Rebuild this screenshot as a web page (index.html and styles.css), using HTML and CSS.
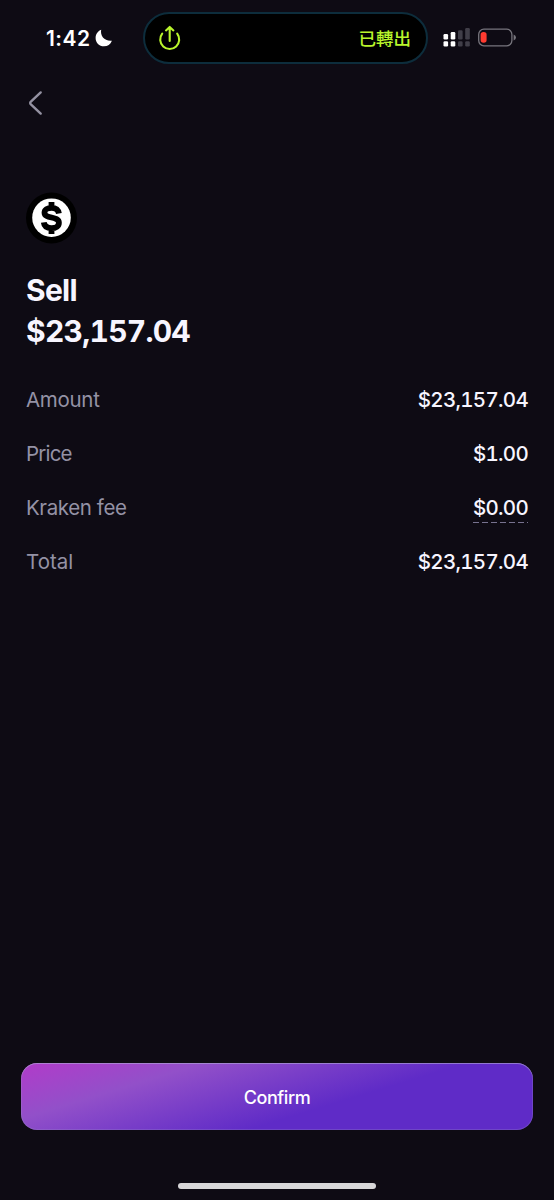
FILE: index.html
```html
<!DOCTYPE html>
<html lang="zh-Hant">
<head>
<meta charset="utf-8">
<title>Sell</title>
<link rel="stylesheet" href="styles.css">
</head>
<body>
<main class="screen">
  <header class="status">
    <div class="clock">
      <span class="time">1:42</span>
      <svg class="moon" width="18" height="18" viewBox="0 0 18 18"><path d="M6.2.8C4.9 6.900 9.600 12.500 16.900 11.700C15.500 15.300 12.600 17.300 9 17.300C4.200 17.300.6 13.700.6 9C.6 5.200 2.800 2.100 6.200.8Z" fill="#fff"/></svg>
    </div>
    <div class="island">
      <svg width="24" height="26" viewBox="0 0 24 26" fill="none" stroke="#b9f52c" stroke-width="2.100" stroke-linecap="round" stroke-linejoin="round"><path d="M4.200 8.600A9.500 9.500 0 1 0 19.200 8.600M11.700 16V2.600M8 5.400L11.700 1.900L15.400 5.400"/></svg>
      <span class="island-label">已轉出</span>
    </div>
    <div class="indicators">
      <svg width="28" height="20" viewBox="0 0 28 20"><g fill="#fff"><rect x=".5" y="13.300" width="4.600" height="5.200" rx="1.200"/><rect x=".5" y="6" width="4.600" height="5.400" rx="1.200"/><rect x="7.700" y="13.300" width="4.600" height="5.200" rx="1.200"/><rect x="7.700" y="4.100" width="4.600" height="7.300" rx="1.200"/></g><g fill="#403e48"><rect x="15" y="13.300" width="4.600" height="5.200" rx="1.200"/><rect x="15" y="2.200" width="4.600" height="9.200" rx="1.200"/><rect x="22.200" y="13.300" width="4.600" height="5.200" rx="1.200"/><rect x="22.200" y="0" width="4.600" height="11.400" rx="1.200"/></g></svg>
      <svg width="39" height="20" viewBox="0 0 39 20"><rect x=".7" y="1.200" width="33.200" height="16.600" rx="5.200" fill="none" stroke="#77757d" stroke-width="1.300"/><rect x="2.600" y="4" width="6" height="10.800" rx="2.800" fill="#ff3b30"/><path d="M35.600 6.600Q38 7.800 38 9.600T35.600 12.500Z" fill="#77757d"/></svg>
    </div>
  </header>

  <button class="back" aria-label="Back">
    <svg width="16" height="26" viewBox="0 0 16 26" fill="none" stroke="#9492a2" stroke-width="2.400" stroke-linecap="round" stroke-linejoin="round"><path d="M12.700 2.400L2.900 11.600Q1.500 13 2.900 14.400L12.700 23.600"/></svg>
  </button>

  <svg class="coin" width="52" height="52" viewBox="0 0 52 52"><circle cx="26.500" cy="26" r="25.500" fill="#000"/><circle cx="26.500" cy="25.700" r="19.300" fill="#fff"/><path d="M33.900 21.600C33.200 17.500 30.300 15.900 26.500 15.900C22.500 15.900 19.500 17.700 19.500 20.700C19.500 27.200 33.900 23.800 33.900 30.700C33.900 34.300 30.700 36.100 26.700 36.100C22.200 36.100 19.200 34.300 18.800 30.400M26.500 10V16M26.500 36V42" fill="none" stroke="#000" stroke-width="5.800"/></svg>

  <h1 class="title"><span class="side">Sell</span><span class="sum">$23,157.04</span></h1>

  <dl class="details">
    <div class="row"><dt class="amount">Amount</dt><dd>$23,157.04</dd></div>
    <div class="row"><dt class="price">Price</dt><dd>$1.00</dd></div>
    <div class="row"><dt class="fee">Kraken fee</dt><dd class="hint">$0.00</dd></div>
    <div class="row"><dt class="total">Total</dt><dd>$23,157.04</dd></div>
  </dl>

  <footer class="footer">
    <button class="confirm">Confirm</button>
    <div class="home"></div>
  </footer>
</main>
</body>
</html>
```
FILE: styles.css
```css
* { box-sizing: border-box; }
body { margin: 0; background: #0e0b14; }
button { border: 0; background: none; padding: 0; font: inherit; color: inherit; }
svg { display: block; flex: none; }
.screen {
  height: 1200px;
  display: flex;
  flex-direction: column;
  color: #f7f5ff;
  font-family: Inter, "Liberation Sans", sans-serif;
}
.status { height: 64px; display: flex; padding: 12px 0 0 46px; flex: none; }
.clock { width: 97px; height: 52px; display: flex; align-items: center; gap: 5px; color: #fff; }
.time { font-size: 21px; font-weight: 600; letter-spacing: .45px; }
.island {
  width: 285px;
  height: 52px;
  border: 2px solid #0d2d3c;
  border-radius: 26px;
  background: #000;
  display: flex;
  align-items: center;
  justify-content: space-between;
  padding: 0 15px 0 13px;
}
.island-label {
  color: #b9f52c;
  font: 500 17.500px/24px "Noto Sans CJK TC", sans-serif;
}
.indicators { display: flex; gap: 7px; padding: 16px 0 0 15px; }
.back { width: 16px; height: 26px; margin: 26px 0 0 28px; flex: none; }
.coin { margin: 76px 0 0 25px; }
.title { display: flex; flex-direction: column; align-items: flex-start; margin: 26px 0 0 26px; font-size: 30px; line-height: 41px; font-weight: 700; }
.side { letter-spacing: -.7px; }
.sum { letter-spacing: -.75px; font-variant-numeric: tabular-nums; }
.details { margin: 21px 26px 0; font-size: 20.500px; line-height: 54px; }
.row { display: flex; justify-content: space-between; align-items: center; height: 54px; }
dt { color: #9492a5; }
.amount { letter-spacing: -.3px; }
.price { letter-spacing: -.8px; }
.fee { letter-spacing: -.4px; }
dd { margin: 0; font-weight: 500; letter-spacing: -.7px; line-height: 28px; font-variant-numeric: tabular-nums; }
.hint {
  padding-bottom: 1px;
  margin-top: 1px;
  background: repeating-linear-gradient(90deg, #77728f 0 6px, transparent 6px 9px) left bottom / 100% 1.500px no-repeat;
}
.footer { margin-top: auto; height: 137px; display: flex; flex-direction: column; align-items: center; flex: none; }
.confirm {
  width: 512px;
  height: 67px;
  padding-top: 2px;
  border-radius: 16px;
  background: linear-gradient(163deg, #b13bc9 0%, #9250c9 25%, #5f2bc7 61%, #5f2bc7 100%);
  box-shadow: inset 0 1px 0 rgba(180, 170, 220, .5), inset 0 0 0 1px rgba(160, 150, 200, .25);
  color: #fff;
  font-size: 18px;
  font-weight: 500;
  letter-spacing: -.4px;
}
.home { width: 198px; height: 6px; margin-top: 53px; border-radius: 3px; background: #d8d7d9; }
```
